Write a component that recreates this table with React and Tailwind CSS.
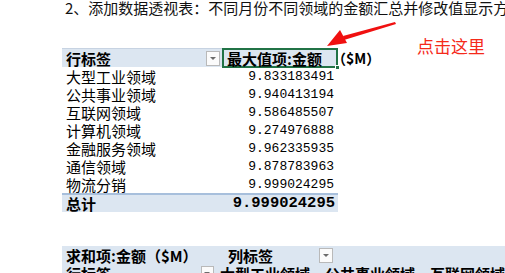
import React from "react";

const rows = [
  { label: "大型工业领域", value: "9.833183491" },
  { label: "公共事业领域", value: "9.940413194" },
  { label: "互联网领域", value: "9.586485507" },
  { label: "计算机领域", value: "9.274976888" },
  { label: "金融服务领域", value: "9.962335935" },
  { label: "通信领域", value: "9.878783963" },
  { label: "物流分销", value: "9.999024295" },
];

const cjk = "font-['Noto_Sans_CJK_SC',sans-serif]";
const mono = "font-['Liberation_Mono','Noto_Sans_CJK_SC',monospace]";

const DropBtn = ({ className }) => (
  <div
    className={`w-[14px] h-[15px] bg-[#fbfbfb] border border-[#b9b9b9] flex items-center justify-center ${className || ""}`}
  >
    <div className="w-0 h-0 border-l-[3px] border-r-[3px] border-t-[3px] border-l-transparent border-r-transparent border-t-[#6b6b6b]" />
  </div>
);

const App = () => {
  return (
    <div className={`relative w-[505px] h-[273px] overflow-hidden bg-white text-black ${cjk}`}>
      <p className="pl-[65px] text-[15px] leading-[16px] whitespace-nowrap text-[#111]">
        2、添加数据透视表：不同月份不同领域的金额汇总并修改值显示方式
      </p>

      {/* pivot table */}
      <div className="mt-[32px] ml-[62px] w-[276px]">
        <div className="flex h-[19px] border-t border-[#c7d3e2]">
          <div className="flex-1 bg-[#dce6f1] flex items-center pl-[4px] justify-between pr-[2px]">
            <span className="text-[15px] font-bold leading-none">行标签</span>
            <DropBtn />
          </div>
          <div className="relative w-[116px] -mt-px h-[20px] border-2 border-[#217346] bg-[#dce6f1] flex items-center pl-[3px]">
            <span className="text-[15px] font-bold leading-none whitespace-nowrap">最大值项:金额</span>
            <div className="absolute -right-[4px] -bottom-[4px] w-[5px] h-[5px] bg-[#217346] border border-white" />
            <span className="absolute left-[108px] text-[14px] font-bold leading-none whitespace-nowrap">（$M）</span>
          </div>
        </div>
        {rows.map((r) => (
          <div key={r.label} className="flex h-[18px] items-center">
            <span className="flex-1 pl-[4px] text-[15px] leading-none">{r.label}</span>
            <span className={`pr-[4px] text-[13px] leading-none ${mono}`}>{r.value}</span>
          </div>
        ))}
        <div className="flex h-[19px] items-center bg-[#dce6f1] border-t-2 border-[#a7bfdc]">
          <span className="flex-1 pl-[4px] text-[15px] font-bold leading-none">总计</span>
          <span className={`pr-[3px] text-[15.5px] font-bold leading-none ${mono}`}>9.999024295</span>
        </div>
      </div>

      {/* second pivot table */}
      <div className="mt-[34px] ml-[62px] bg-[#dce6f1]">
        <div className="flex h-[18px] items-center">
          <span className="w-[166px] pl-[4px] text-[15px] font-bold leading-none whitespace-nowrap">求和项:金额（$M）</span>
          <span className="w-[91px] text-[15px] font-bold leading-none">列标签</span>
          <DropBtn />
        </div>
        <div className="flex h-[18px] items-center">
          <span className="w-[145px] pl-[4px] text-[15px] font-bold leading-none">行标签</span>
          <DropBtn className="mr-[6px]" />
          <span className="text-[15px] font-bold leading-none whitespace-nowrap">大型工业领域　公共事业领域　互联网领域</span>
        </div>
      </div>

      {/* annotation */}
      <svg className="absolute left-0 top-0" width="505" height="273" viewBox="0 0 505 273">
        <path d="M395 22 L343 36 L344 40 L396 24 Z" fill="#f01010" />
        <path d="M327 46 L340 30 L347 43 Z" fill="#f01010" />
      </svg>
      <span className="absolute left-[417px] top-[36px] text-[17px] leading-[20px] text-[#f52a1a] whitespace-nowrap">
        点击这里
      </span>
    </div>
  );
};

export default App;
